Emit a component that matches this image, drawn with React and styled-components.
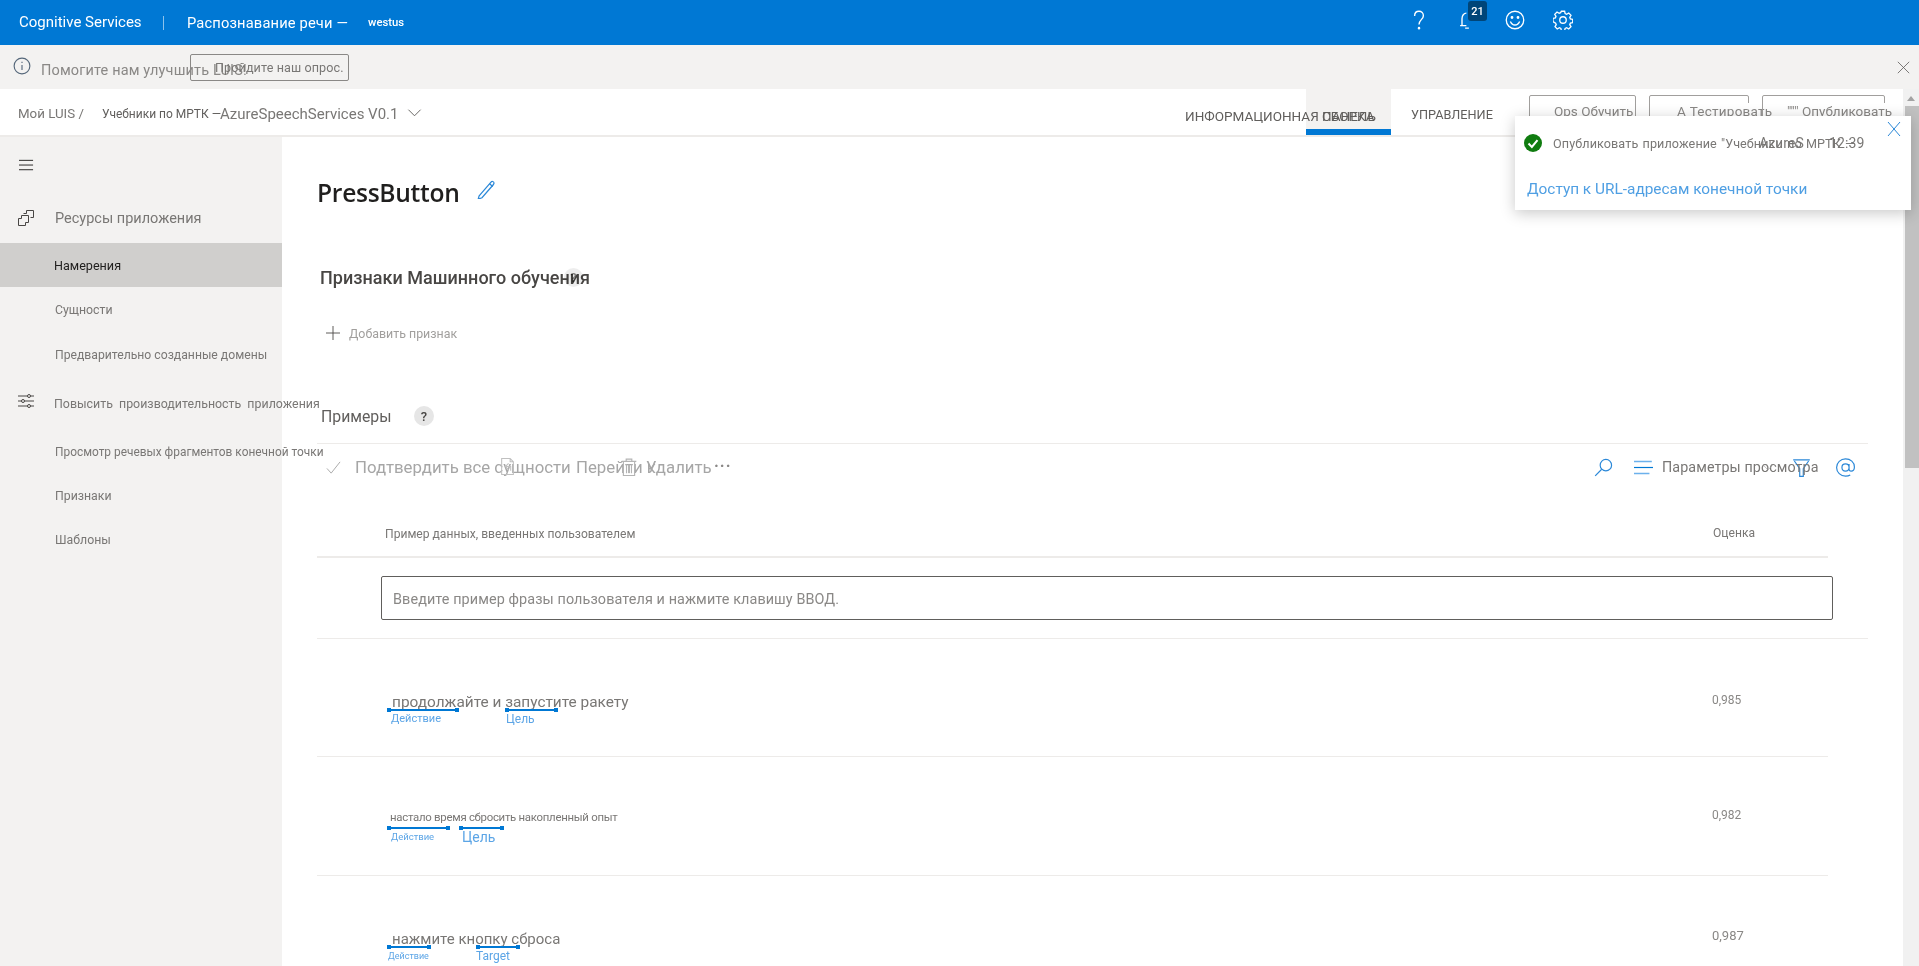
import React from "react";
import styled, { createGlobalStyle } from "styled-components";

const Global = createGlobalStyle`
  html, body { margin: 0; padding: 0; height: 100%; overflow: hidden; background: #fff; }
  body { font-family: Roboto, "Open Sans", "Liberation Sans", sans-serif; color: #605e5c; }
  * { box-sizing: border-box; }
  #root { height: 966px; overflow: hidden; }
`;

const Page = styled.div`display: flex; flex-direction: column; width: 1919px; height: 966px; overflow: hidden;`;

/* ---------- top bar ---------- */
const TopBar = styled.header`
  height: 45px; flex: none; display: flex; align-items: center; background: #0078d4; color: #fff; padding-left: 19px;
`;
const Brand = styled.span`flex: none; font-size: 15px; width: 144px; white-space: nowrap; margin-top: -1px;`;
const BarSep = styled.span`flex: none; width: 1px; height: 14px; background: #8cc2ec; margin-right: 23px;`;
const Product = styled.span`flex: none; font-size: 14.7px; width: 181px; white-space: nowrap; letter-spacing: .15px;`;
const Region = styled.span`flex: none; font-size: 11.3px; font-weight: 500; width: 1027px; white-space: nowrap; margin-top: -1px;`;
const BarIcons = styled.div`display: flex; align-items: center; flex: none; margin-top: -5px;`;
const BarIcon = styled.span`width: 48px; flex: none; display: flex; justify-content: center; position: relative;`;
const Badge = styled.span`
  position: absolute; left: 25px; top: -9px; width: 19px; height: 20px; background: #004578; color: #fff;
  font-size: 11px; font-weight: 500; display: flex; align-items: center; justify-content: center; border-radius: 3px;
`;

/* ---------- info bar ---------- */
const InfoBar = styled.div`
  height: 44px; flex: none; display: flex; align-items: center; background: #f3f2f1; padding-left: 13px; position: relative;
`;
const InfoIcon = styled.span`display: flex; flex: none; margin-top: -3px;`;
const InfoText = styled.span`flex: none; font-size: 14.5px; color: #8a8886; margin-left: 10px; width: 149px; white-space: nowrap; letter-spacing: .15px; margin-top: 6px;`;
const Survey = styled.button`
  flex: none; width: 159px; height: 27px; margin-top: 1px; border: 1px solid #8a8886; border-radius: 2px; background: transparent; padding: 0 0 0 24px;
  font: 12.6px Roboto, sans-serif; color: #797775; text-align: left; white-space: nowrap; letter-spacing: .1px;
`;
const InfoClose = styled.span`margin-left: auto; margin-right: 9px; display: flex;`;

/* ---------- workspace ---------- */
const Lower = styled.div`flex: 1; display: flex; min-height: 0; position: relative;`;
const Workspace = styled.div`flex: 1; min-width: 0; display: flex; flex-direction: column;`;
const ScrollTrack = styled.div`width: 16px; flex: none; background: #f1f1f1; display: flex; flex-direction: column; align-items: center; padding-top: 7px;`;
const ScrollArrow = styled.span`width: 0; height: 0; border: 4px solid transparent; border-bottom: 5px solid #a3a3a3; border-top: 0;`;
const ScrollThumb = styled.span`width: 14px; margin-left: 2px; height: 362px; margin-top: 5px; background: #c1c1c1;`;

const SubHeader = styled.div`
  height: 48px; flex: none; display: flex; align-items: center; background: #fff; border-bottom: 2px solid #edebe9; padding-left: 18px;
`;
const Crumb = styled.span`flex: none; font-size: 13.3px; color: #797775; width: 84px; white-space: nowrap; margin-top: 3px;`;
const CrumbApp = styled.span`flex: none; font-size: 12px; color: #605e5c; width: 118px; white-space: nowrap; margin-top: 3px;`;
const CrumbName = styled.span`flex: none; font-size: 15px; color: #797775; width: 187px; white-space: nowrap; margin-top: 3px;`;
const Chevron = styled.span`flex: none; display: flex; width: 20px; margin-right: 758px;`;
const TabSlot = styled.div`
  height: 46px; width: ${p => p.$width}px; display: flex; align-items: center; flex: none; position: relative;
  white-space: nowrap; font-size: ${p => p.$fs || 13.5}px; color: #605e5c; padding-left: ${p => p.$pad || 0}px;
  background: ${p => p.$active ? "#f3f2f1" : "transparent"};
  border-bottom: 6px solid ${p => p.$active ? "#0078d4" : "transparent"};
`;
const TabLabel = styled.span`margin-top: ${p => p.$mt || 13}px; position: relative; z-index: 1;`;

const Commands = styled.div`display: flex; align-items: flex-start; height: 46px; padding-top: 6px; flex: none;`;
const Cmd = styled.div`
  flex: none; width: ${p => p.$width}px; height: 40px; margin-right: ${p => p.$gap}px; border: 1px solid #a19f9d; border-radius: 2px;
  padding-left: ${p => p.$pad}px; padding-top: 7px; font-size: 13.5px; color: #8a8886; white-space: nowrap;
`;
const CmdLabel = styled.span`display: inline-block; background: #fff; line-height: 16px; padding: 0 2px; letter-spacing: ${p => p.$ls || 0}px;`;

const Body = styled.div`flex: 1; display: flex; min-height: 0;`;

/* ---------- side nav ---------- */
const Side = styled.nav`width: 282px; flex: none; background: #f3f2f1; display: flex; flex-direction: column; padding-top: 21px; position: relative; z-index: 1;`;
const Burger = styled.span`display: flex; margin-left: 19px; height: 15px; margin-bottom: 20px;`;
const NavHead = styled.div`
  height: ${p => p.$h}px; flex: none; display: flex; align-items: center; white-space: nowrap; padding-left: 18px; color: #797775;
  font-size: ${p => p.$fs}px; word-spacing: ${p => p.$ws || 0}px;
`;
const NavIcon = styled.span`width: ${p => p.$w}px; flex: none; display: flex; margin-top: ${p => p.$mt || 0}px;`;
const NavItem = styled.div`
  height: ${p => p.$h || 44}px; flex: none; display: flex; align-items: center; padding-left: ${p => p.$active ? 54 : 55}px; white-space: nowrap; font-size: ${p => p.$fs || 12.6}px;
  color: ${p => p.$active ? "#201f1e" : "#797775"}; background: ${p => p.$active ? "#d0cfcd" : "transparent"};
`;

/* ---------- main ---------- */
const Main = styled.main`flex: 1; min-width: 0; background: #fff; padding-left: 35px; padding-right: 35px;`;
const TitleRow = styled.div`height: 40px; margin-top: 35px; display: flex; align-items: center;`;
const Title = styled.h1`margin: 0; font: 600 24.6px "Open Sans", sans-serif; color: #201f1e; letter-spacing: -.3px;`;
const Pencil = styled.span`display: flex; margin-left: 17px; margin-top: -6px;`;
const FeatHead = styled.h2`
  margin: 50px 0 0; height: 30px; padding-left: 3px; display: flex; align-items: center; font: 500 18px Roboto, sans-serif; color: #484644; position: relative; white-space: nowrap; letter-spacing: .02px;
`;
const HelpDot = styled.span`
  width: ${p => p.$size}px; height: ${p => p.$size}px; flex: none; border-radius: 50%; background: #e6e6e6; color: #484644; font: 500 13px Roboto, sans-serif;
  display: flex; align-items: center; justify-content: center;
`;
const FeatHelp = styled(HelpDot)`position: absolute; left: 247px; top: 6px; opacity: .7; mix-blend-mode: multiply;`;
const AddRow = styled.div`height: 24px; margin-top: 29px; display: flex; align-items: center; padding-left: 9px; font-size: 12.4px; color: #a19f9d;`;
const AddText = styled.span`margin-left: 9px;`;
const ExHead = styled.div`height: 30px; margin-top: 56px; display: flex; align-items: center; padding-left: 4px;`;
const ExTitle = styled.h2`margin: 0; font: 400 15.8px Roboto, sans-serif; color: #605e5c; width: 93px;`;
const Toolbar = styled.div`height: 47px; margin-top: 12px; border-top: 1px solid #edebe9; display: flex; align-items: center; padding-left: 9px; color: #a6a6a6; font-size: 16.8px; white-space: nowrap;`;
const ToolSlot = styled.span`display: flex; align-items: center; flex: none; width: ${p => p.$w}px; position: relative;`;
const OverIcon = styled.span`position: absolute; left: ${p => p.$left}px; top: 1px; display: flex;`;
const Dots = styled.span`font-size: 16px; letter-spacing: 1px; font-weight: 700; color: #8a8886; margin: -3px 0 0 -2px;`;
const ToolRight = styled.div`margin-left: auto; display: flex; align-items: center; padding-right: 13px; color: #797775; font-size: 14.3px;`;
const ToolIcon = styled.span`display: flex; flex: none; width: ${p => p.$w}px;`;
const ViewText = styled.span`flex: none; width: 130px; white-space: nowrap; position: relative; letter-spacing: .1px;`;
const ViewChevron = styled.span`position: absolute; left: 101px; top: 4px; display: flex;`;
const HeaderRow = styled.div`height: 47px; margin-top: 21px; margin-right: 40px; border-bottom: 2px solid #edebe9; display: flex; align-items: center; font-size: 12.1px; color: #797775;`;
const HeadExample = styled.span`flex: 1; padding-left: 68px;`;
const HeadScore = styled.span`width: 115px; margin-top: -2px;`;
const InputRow = styled.div`height: 81px; padding: 18px 35px 0 64px; border-bottom: 1px solid #edebe9;`;
const PhraseInput = styled.div`
  height: 44px; border: 1px solid #605e5c; border-radius: 2px; display: flex; align-items: center; padding: 3px 0 0 11px; font-size: 14.4px; letter-spacing: .1px; color: #8a8886;
`;
const Row = styled.div`
  height: ${p => p.$h}px; margin-right: 40px; display: flex; padding-top: ${p => p.$pt}px;
  border-bottom: ${p => p.$last ? 0 : "1px solid #edebe9"};
`;
const RowMain = styled.div`flex: 1; padding-left: 70px;`;
const Phrase = styled.div`font-size: ${p => p.$fs}px; line-height: 20px; color: #797775; padding-left: ${p => p.$pad}px; white-space: nowrap; letter-spacing: ${p => p.$ls || 0}px;`;
const Marks = styled.div`display: flex; margin-top: ${p => p.$mt}px;`;
const Mark = styled.div`width: ${p => p.$w}px; margin-left: ${p => p.$ml || 0}px; flex: none;`;
const MarkLine = styled.div`
  height: 2px; background: #0078d4; position: relative;
  &::before, &::after { content: ""; position: absolute; top: -1px; width: 4px; height: 4px; background: #0078d4; }
  &::before { left: 0; } &::after { right: 0; }
`;
const MarkLabel = styled.div`
  font-size: ${p => p.$fs}px; line-height: 14px; color: #5ca5e6; padding-left: ${p => p.$pad || 0}px; margin-top: ${p => p.$mt || 1}px; white-space: nowrap;
`;
const Score = styled.div`width: 116px; font-size: ${p => p.$fs || 12}px; color: #8a8886; margin-top: ${p => p.$mt}px; margin-left: ${p => p.$ml || 0}px;`;

/* ---------- toast ---------- */
const Toast = styled.aside`
  position: absolute; left: 1515px; top: 27px; width: 396px; height: 94px; background: #fff; box-shadow: 0 3px 14px rgba(0,0,0,.22); padding: 0 0 0 9px; z-index: 2;
`;
const ToastClose = styled.span`position: absolute; right: 9px; top: 5px; display: flex;`;
const ToastLine = styled.div`display: flex; align-items: center; height: 20px; margin-top: 17px; font-size: 12.6px; color: #797775; white-space: nowrap; letter-spacing: .1px; word-spacing: 1px;`;
const ToastPart = styled.span`width: ${p => p.$w}px; margin-left: ${p => p.$ml || 0}px; flex: none; font-size: ${p => p.$fs || 12.6}px;`;
const ToastLink = styled.a`display: block; font-size: 15.4px; color: #4f9fe3; margin-top: 27px; margin-left: 3px; white-space: nowrap; text-decoration: none;`;

/* ---------- icons ---------- */
const Ic = ({ s = 16, c = "currentColor", w = 1, children }) => (
  <svg width={s} height={s} viewBox="0 0 16 16" fill="none" stroke={c} strokeWidth={w} style={{ flex: "none" }}>{children}</svg>
);

export default function App() {
  return (
    <Page>
      <Global />
      <TopBar>
        <Brand>Cognitive Services</Brand>
        <BarSep />
        <Product>Распознавание речи —</Product>
        <Region>westus</Region>
        <BarIcons>
          <BarIcon><Ic s={20} w={1.1}><path d="M4.500 4.800C4.500 2.500 6 1 8 1s3.500 1.500 3.500 3.500c0 3-3.500 3.500-3.500 7" /><circle cx="8" cy="14.500" r=".5" fill="#fff" /></Ic></BarIcon>
          <BarIcon>
            <Ic s={20} w={1.1}><path d="M2.500 12.500h5M4 12.500V7c0-2.500 1.500-4.500 3.500-4.500M6.500 14.500h3" /></Ic>
            <Badge>21</Badge>
          </BarIcon>
          <BarIcon><Ic s={20} w={1.05}><circle cx="8" cy="8" r="7" /><circle cx="5.600" cy="6" r=".6" fill="#fff" /><circle cx="10.400" cy="6" r=".6" fill="#fff" /><path d="M4.300 9.200c.8 1.900 2.100 2.800 3.700 2.800s2.900-.9 3.700-2.800" /></Ic></BarIcon>
          <BarIcon><Ic s={20} w={1.05}><path d="M6.700 1h2.600l.4 1.900 1.200.5 1.700-1 1.800 1.800-1 1.700.5 1.200 1.900.4v2.600l-1.900.4-.5 1.200 1 1.700-1.800 1.800-1.700-1-1.200.5-.4 1.900H6.700l-.4-1.900-1.200-.5-1.700 1-1.800-1.800 1-1.700-.5-1.200L0 9.300V6.700l1.900-.4.5-1.200-1-1.700 1.800-1.800 1.700 1 1.200-.5z" /><circle cx="8" cy="8" r="2.600" /></Ic></BarIcon>
        </BarIcons>
      </TopBar>

      <InfoBar>
        <InfoIcon><Ic s={18} c="#55677a"><circle cx="8" cy="8" r="7" /><path d="M8 7v4.500M8 4.300v1" /></Ic></InfoIcon>
        <InfoText>Помогите нам улучшить LUIS!</InfoText>
        <Survey>Пройдите наш опрос.</Survey>
        <InfoClose><Ic s={13} c="#605e5c"><path d="M1 1l14 14M15 1L1 15" /></Ic></InfoClose>
      </InfoBar>

      <Lower>
        <Workspace>
          <SubHeader>
            <Crumb>Мой LUIS /</Crumb>
            <CrumbApp>Учебники по МРТК —</CrumbApp>
            <CrumbName>AzureSpeechServices V0.1</CrumbName>
            <Chevron><Ic s={15} c="#605e5c"><path d="M1.500 5L8 11.500 14.500 5" /></Ic></Chevron>
            <TabSlot $width={121}><TabLabel>ИНФОРМАЦИОННАЯ ПАНЕЛЬ</TabLabel></TabSlot>
            <TabSlot $width={85} $active $pad={16}><TabLabel>СБОРКА</TabLabel></TabSlot>
            <TabSlot $width={138} $pad={20} $fs={12.7}><TabLabel $mt={11}>УПРАВЛЕНИЕ</TabLabel></TabSlot>
            <Commands>
              <Cmd $width={107} $gap={13} $pad={22}><CmdLabel>Ops Обучить</CmdLabel></Cmd>
              <Cmd $width={100} $gap={13} $pad={25}><CmdLabel $ls={.25}>A Тестировать</CmdLabel></Cmd>
              <Cmd $width={123} $gap={0} $pad={22}><CmdLabel>""" Опубликовать</CmdLabel></Cmd>
            </Commands>
          </SubHeader>
          <Body>
            <Side>
              <Burger><Ic s={15} c="#201f1e" w={1}><path d="M0 2.500h15M0 7.500h15M0 12.500h15" /></Ic></Burger>
              <NavHead $h={50} $fs={14.5}>
                <NavIcon $w={37}><Ic s={16} c="#484644"><path d="M5.500 3.500h3v-3h7v7h-3M.5 8.500h3v-3h7v7h-3v3h-7z" /></Ic></NavIcon>
                Ресурсы приложения
              </NavHead>
              <NavItem $active>Намерения</NavItem>
              <NavItem $h={46} $fs={12.3}>Сущности</NavItem>
              <NavItem $fs={12.2}>Предварительно созданные домены</NavItem>
              <NavHead $h={53} $fs={12.4} $ws={3}>
                <NavIcon $w={36} $mt={-6}><Ic s={16} c="#484644"><path d="M0 3h16M0 8h16M0 13h16" /><circle cx="11" cy="3" r="1.500" fill="#f3f2f1" /><circle cx="5" cy="8" r="1.500" fill="#f3f2f1" /><circle cx="11" cy="13" r="1.500" fill="#f3f2f1" /></Ic></NavIcon>
                Повысить производительность приложения
              </NavHead>
              <NavItem $fs={11.9}>Просмотр речевых фрагментов конечной точки</NavItem>
              <NavItem $fs={12.3}>Признаки</NavItem>
              <NavItem $fs={12.3}>Шаблоны</NavItem>
            </Side>
            <Main>
              <TitleRow>
                <Title>PressButton</Title>
                <Pencil><Ic s={20} c="#2b88d8"><path d="M2.500 13.500l9.500-11c.7-.8 2-.6 2.300.2.3.7 0 1.300-.5 1.900l-9 10.400-3 1z" /><path d="M10.800 3.800l2.600 2.200" /></Ic></Pencil>
              </TitleRow>
              <FeatHead>Признаки Машинного обучения<FeatHelp $size={19}>?</FeatHelp></FeatHead>
              <AddRow><Ic s={14} c="#484644"><path d="M8 0v16M0 8h16" /></Ic><AddText>Добавить признак</AddText></AddRow>
              <ExHead><ExTitle>Примеры</ExTitle><HelpDot $size={20}>?</HelpDot></ExHead>
              <Toolbar>
                <ToolIcon $w={29}><Ic s={15} c="#a6a6a6"><path d="M1 9l4.500 5L15 2" /></Ic></ToolIcon>
                <ToolSlot $w={221}>
                  Подтвердить все сущности
                  <OverIcon $left={144}><Ic s={17} c="#c0c0c0"><path d="M2.500 15.500V.5h8l3 3v12zM10.500 .5v3h3M9 5L6 8l3 3M6 8h5v4" /></Ic></OverIcon>
                </ToolSlot>
                <ToolSlot $w={70}>
                  Перейти к
                  <OverIcon $left={44}><Ic s={18} c="#b4b4b4"><path d="M1.500 3h13M5.500 3V1h5v2M3 3v12.500h10V3M5.800 5.500v8M8 5.500v8M10.200 5.500v8" /></Ic></OverIcon>
                </ToolSlot>
                <ToolSlot $w={70}>Удалить</ToolSlot>
                <ToolSlot $w={24}><Dots>···</Dots></ToolSlot>
                <ToolRight>
                  <ToolIcon $w={40}><Ic s={19} c="#2b88d8"><circle cx="10" cy="6" r="4.800" /><path d="M6.500 9.500L1 15" /></Ic></ToolIcon>
                  <ToolIcon $w={28}><Ic s={19}><path d="M0 3h15M0 13h13" stroke="#6cb1ec" strokeWidth="1.300" /><path d="M0 8h16" stroke="#0078d4" strokeWidth="1" /></Ic></ToolIcon>
                  <ViewText>
                    Параметры просмотра
                    <ViewChevron><Ic s={10} c="#a19f9d"><path d="M1 4l7 7 7-7" /></Ic></ViewChevron>
                  </ViewText>
                  <ToolIcon $w={44}><Ic s={19} c="#2b88d8"><path d="M1 1.500h14M2 2.500l4.500 6.500v6.500h3V9L14 2.500" /></Ic></ToolIcon>
                  <ToolIcon $w={19}><Ic s={19} c="#2b88d8"><path d="M11 8c0 1.700-1.300 3-3 3s-3-1.300-3-3 1.300-3 3-3 3 1.300 3 3zm0-3v4.500c0 1 .8 1.500 1.700 1.500 1.600 0 2.800-1.500 2.800-3.500C15.500 3.600 12.200.7 8 .7 3.900.7.500 3.900.5 8s3.400 7.300 7.500 7.300c1.700 0 3-.4 4-1" /></Ic></ToolIcon>
                </ToolRight>
              </Toolbar>
              <HeaderRow>
                <HeadExample>Пример данных, введенных пользователем</HeadExample>
                <HeadScore>Оценка</HeadScore>
              </HeaderRow>
              <InputRow><PhraseInput>Введите пример фразы пользователя и нажмите клавишу ВВОД.</PhraseInput></InputRow>
              <Row $h={118} $pt={53}>
                <RowMain>
                  <Phrase $fs={15.4} $pad={5}>продолжайте и запустите ракету</Phrase>
                  <Marks $mt={-3}>
                    <Mark $w={72}><MarkLine /><MarkLabel $fs={11} $pad={4}>Действие</MarkLabel></Mark>
                    <Mark $w={53} $ml={46}><MarkLine /><MarkLabel $fs={12} $pad={1}>Цель</MarkLabel></Mark>
                  </Marks>
                </RowMain>
                <Score $mt={1}>0,985</Score>
              </Row>
              <Row $h={119} $pt={50}>
                <RowMain>
                  <Phrase $fs={11.4} $pad={3} $ls={-.27}>настало время сбросить накопленный опыт</Phrase>
                  <Marks $mt={0}>
                    <Mark $w={63}><MarkLine /><MarkLabel $fs={9.5} $pad={4}>Действие</MarkLabel></Mark>
                    <Mark $w={45} $ml={9}><MarkLine /><MarkLabel $fs={14} $pad={3}>Цель</MarkLabel></Mark>
                  </Marks>
                </RowMain>
                <Score $mt={1}>0,982</Score>
              </Row>
              <Row $h={100} $pt={53} $last>
                <RowMain>
                  <Phrase $fs={15} $pad={5}>нажмите кнопку сброса</Phrase>
                  <Marks $mt={-3}>
                    <Mark $w={44}><MarkLine /><MarkLabel $fs={9} $pad={1}>Действие</MarkLabel></Mark>
                    <Mark $w={44} $ml={45}><MarkLine /><MarkLabel $fs={12}>Target</MarkLabel></Mark>
                  </Marks>
                </RowMain>
                <Score $mt={-1} $fs={13} $ml={-2}>0,987</Score>
              </Row>
            </Main>
          </Body>
        </Workspace>
        <ScrollTrack><ScrollArrow /><ScrollThumb /></ScrollTrack>
        <Toast>
          <ToastClose><Ic s={16} c="#2b88d8"><path d="M2 1l12 14M14 1L2 15" /></Ic></ToastClose>
          <ToastLine>
            <Ic s={18} c="none"><circle cx="8" cy="8" r="8" fill="#107c10" /><path d="M4 8.500l3 3 5-6" stroke="#fff" strokeWidth="1.800" /></Ic>
            <ToastPart $w={206} $ml={11}>Опубликовать приложение "Учебники по МРТК —</ToastPart>
            <ToastPart $w={70} $fs={14}>AzureS</ToastPart>
            <ToastPart $w={40} $fs={14}>12:39</ToastPart>
          </ToastLine>
          <ToastLink>Доступ к URL-адресам конечной точки</ToastLink>
        </Toast>
      </Lower>
    </Page>
  );
}
